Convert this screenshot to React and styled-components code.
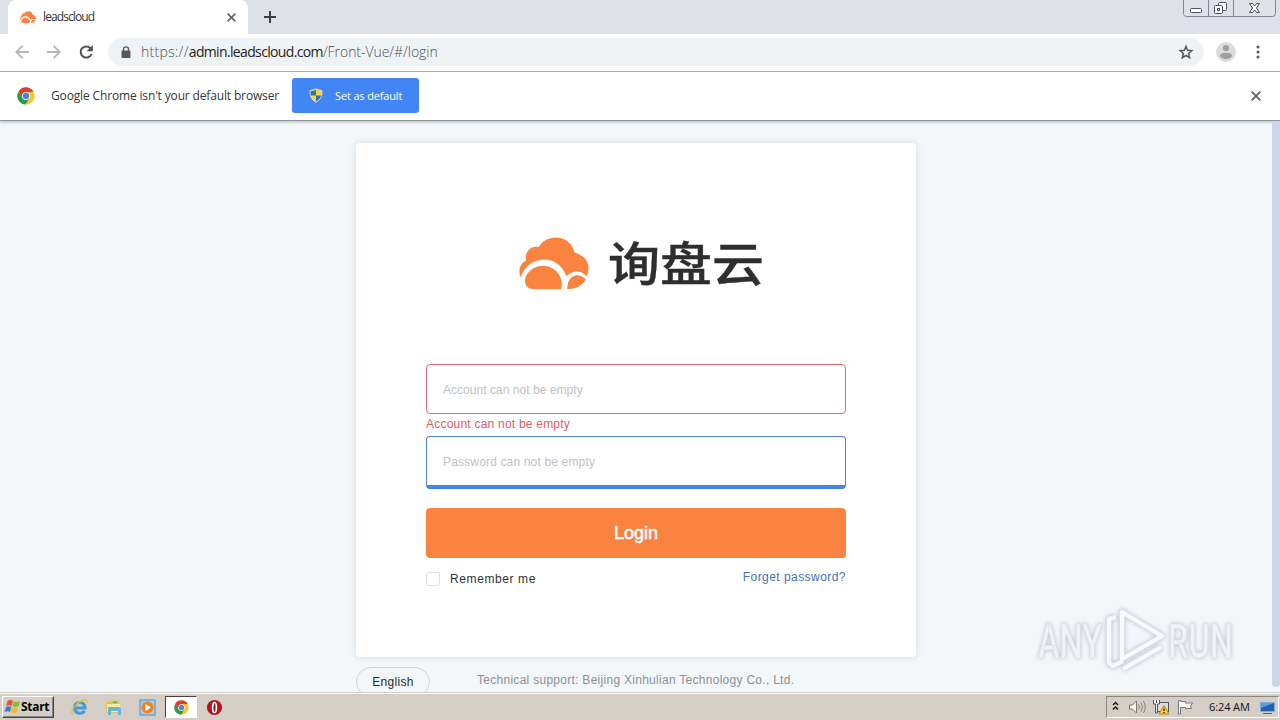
import React from 'react';
import styled, { createGlobalStyle } from 'styled-components';

const App = () => {
  return (
    <Screen>
      <GlobalStyle />
      <TabStrip>
        <Tab>
          <CloudIcon width='16' height='12' />
          <TabTitle>leadscloud</TabTitle>
          <CrossIcon size={9} />
        </Tab>
        <NewTab viewBox='0 0 12 12'>
          <path d='M6 0v12M0 6h12' />
        </NewTab>
        <WindowButtons />
      </TabStrip>
      <Toolbar>
        <NavIcons />
        <AddressBar>
          <LockIcon />
          <Url>
            <i>https://</i>
            <b>admin.leadscloud.com</b>/Front-Vue/#/login
          </Url>
          <StarIcon />
        </AddressBar>
        <ProfileIcon />
        <MenuDots viewBox='0 0 4 14'>
          <circle cx='2' cy='2' r='1.5' />
          <circle cx='2' cy='7' r='1.5' />
          <circle cx='2' cy='12' r='1.5' />
        </MenuDots>
      </Toolbar>
      <InfoBar>
        <ChromeIcon size={18} />
        <InfoText>Google Chrome isn't your default browser</InfoText>
        <DefaultButton>
          <ShieldIcon />
          <span>Set as default</span>
        </DefaultButton>
        <CrossIcon size={10} />
      </InfoBar>
      <LoginPage />
      <Taskbar />
    </Screen>
  );
};

const LoginPage = () => {
  return (
    <Page>
      <Column>
        <Card>
          <Brand>
            <CloudIcon width='70' height='52' />
            <BrandName>询盘云</BrandName>
          </Brand>
          <Field $color='#dc6a78' placeholder='Account can not be empty' />
          <FieldError>Account can not be empty</FieldError>
          <Field
            $color='#4a84d8'
            $focused
            placeholder='Password can not be empty'
          />
          <LoginButton>Login</LoginButton>
          <Options>
            <Remember>
              <Checkbox />
              <span>Remember me</span>
            </Remember>
            <Forget>Forget password?</Forget>
          </Options>
        </Card>
        <Footer>
          <Language>English</Language>
          <Support>
            Technical support: Beijing Xinhulian Technology Co., Ltd.
          </Support>
        </Footer>
      </Column>
      <Scrollbar />
      <Watermark />
    </Page>
  );
};

const Taskbar = () => {
  return (
    <Bar>
      <StartButton>
        <WindowsIcon />
        <span>Start</span>
      </StartButton>
      <QuickLaunch>
        <ExplorerIcon />
        <FolderIcon />
        <PlayerIcon />
        <ActiveTask>
          <ChromeIcon size={15} />
        </ActiveTask>
        <OperaIcon />
      </QuickLaunch>
      <Tray>
        <TrayIcons />
        <Clock>6:24 AM</Clock>
        <DesktopIcon />
      </Tray>
    </Bar>
  );
};

// Icons
const CloudIcon = (props) => (
  <svg viewBox='0 0 71 53' {...props}>
    <path
      fill='#fa8340'
      d='M1.500 41C-1.500 34 1 27 7 24C5 15 13 8 20 10.500C27-3.500 52-3.500 56.500 16C66 18 72 26 70.500 34C70.300 37 69.500 39 68.500 40C62 32 53 35 48 40C40 16 9 18 1.500 41Z'
    />
    <path
      fill='#fa8340'
      d='M7 49C5 45 6 41 8 38C17 25 36 27 42 41C44 45 43.500 49 43 53H15C11 53 8 52 7 49Z'
    />
    <path fill='#fa8340' d='M49 53C49 39 59 35 68 43C64 50 58 53 49 53Z' />
  </svg>
);

const CrossIcon = ({ size }) => (
  <Cross viewBox='0 0 10 10' width={size} height={size}>
    <path d='M.700.700l8.600 8.600M9.300.700L.700 9.300' />
  </Cross>
);

const WindowButtons = () => (
  <WindowControls viewBox='0 0 94 18'>
    <path d='M.500 0v13.500q0 3 3 3h86q3 0 3-3V0M25.500 0v16M50.500 0v16' />
    <g stroke='#4d525c' fill='#fff'>
      <rect x='7.500' y='8.500' width='11' height='4' rx='1' />
      <rect x='35.500' y='2.500' width='8' height='8' rx='1' />
      <rect x='31.500' y='5.500' width='8' height='8' rx='1' />
      <rect x='34.500' y='8.500' width='2' height='2' />
      <path d='M66.500 3.500h3l2 2.500 2-2.500h3l-3 4.500 3 4.500h-3l-2-2.500-2 2.500h-3l3-4.500z' />
    </g>
  </WindowControls>
);

const NavIcons = () => (
  <Nav viewBox='0 0 80 16'>
    <path stroke='#b4b6b8' d='M15 8H2.500M8.500 1.800L2.300 8l6.200 6.200' />
    <path stroke='#b4b6b8' d='M33 8h12.500M39.500 1.800L45.700 8l-6.200 6.200' />
    <path stroke='#505356' strokeWidth='2' d='M76.400 4.200A5.600 5.600 0 1 0 77.500 10' />
    <path fill='#505356' d='M78.800 1v6.200h-6.200z' />
  </Nav>
);

const LockIcon = () => (
  <svg width='10' height='13' viewBox='0 0 10 13'>
    <rect x='.500' y='4.500' width='9' height='7.500' rx='1' fill='#55585c' />
    <path
      d='M2.500 5V3.300a2.500 2.400 0 0 1 5 0V5'
      fill='none'
      stroke='#55585c'
      strokeWidth='1.400'
    />
  </svg>
);

const StarIcon = () => (
  <Star viewBox='0 0 16 16'>
    <path d='M8 2.300l1.600 4 4.200.400-3.200 2.800 1 4.200L8 11.500l-3.600 2.200 1-4.200-3.200-2.800 4.200-.400z' />
  </Star>
);

const ProfileIcon = () => (
  <Profile viewBox='0 0 20 20'>
    <circle cx='10' cy='10' r='10' fill='#dcdcdc' />
    <circle cx='10' cy='6' r='3.100' fill='#a0a0a0' />
    <ellipse cx='10' cy='13.800' rx='6' ry='3.100' fill='#a0a0a0' />
  </Profile>
);

const ChromeIcon = ({ size }) => (
  <svg width={size} height={size} viewBox='0 0 18 18'>
    <circle cx='9' cy='9' r='8.600' fill='#fbc52c' />
    <path
      fill='#de3d30'
      d='M1.500 4.700A8.600 8.600 0 0 1 16.500 4.800L9 5.200 5.500 11z'
    />
    <path
      fill='#279b54'
      d='M1.500 4.700A8.600 8.600 0 0 0 8.500 17.600L12.600 11 9 13 5.500 11z'
    />
    <circle cx='9' cy='9' r='4' fill='#fff' />
    <circle cx='9' cy='9' r='3.200' fill='#4a86e0' />
  </svg>
);

const ShieldIcon = () => (
  <svg width='14' height='15' viewBox='0 0 14 15'>
    <path
      fill='#f5d33c'
      stroke='#d9dccb'
      d='M7 .800Q10 2.500 13 2.500Q13.500 11 7 14.200Q.500 11 1 2.500Q4 2.500 7 .800Z'
    />
    <path fill='#2f70b8' d='M7 1.800V7.500H1.800Q1.500 5 1.700 3.200Q4.500 3 7 1.800Z' />
    <path fill='#2f70b8' d='M7 7.500h5.100Q11 11.500 7 13.500Z' />
  </svg>
);

const WindowsIcon = () => (
  <svg width='17' height='16' viewBox='0 0 17 16'>
    <path fill='#e5572a' d='M3.500 2Q6 0 9 1.800L7.600 7Q5 5.600 2.200 7Z' />
    <path fill='#86b93c' d='M9.800 2.200Q12.500 3.600 16 2L14.500 7.200Q11.500 8.700 8.500 7.300Z' />
    <path fill='#3b7ec9' d='M2 7.900Q4.800 6.500 7.400 7.900L6 13Q3.500 11.600.500 13Z' />
    <path fill='#f4bc2b' d='M8.300 8.200Q11 9.600 14.200 8.200L12.700 13.200Q9.800 14.800 6.900 13.400Z' />
  </svg>
);

const ExplorerIcon = () => (
  <svg width='17' height='17' viewBox='0 0 17 17'>
    <path
      fill='none'
      stroke='#3c9cdc'
      strokeWidth='3'
      d='M4 9h10Q13.500 3.500 8.800 3.500Q3.500 3.800 3.500 9Q4 14.200 9 14.200Q12 14.200 13.600 12'
    />
    <path
      fill='none'
      stroke='#e8bd35'
      strokeWidth='1.300'
      d='M2.500 15Q-1 15 2.500 9Q7 2.500 13 1Q17-.200 15.700 4'
    />
  </svg>
);

const FolderIcon = () => (
  <svg width='17' height='17' viewBox='0 0 17 17'>
    <path fill='#e3bf58' d='M1 3h5l1-1.500h7V14H1z' />
    <path fill='#f8e8a2' d='M2 5h13v8H2z' />
    <path fill='#65b5dc' d='M3 9q0-1 1-1h10q2 0 2 2v6h-3v-4H6v4H3z' />
    <path fill='#5cae5b' d='M8 2.500h4V4H8z' />
  </svg>
);

const PlayerIcon = () => (
  <svg width='17' height='17' viewBox='0 0 17 17'>
    <rect x='1' y='1' width='15' height='15' fill='#a7cce9' stroke='#5290c4' />
    <circle cx='8.500' cy='8.500' r='6' fill='#ee8420' />
    <path fill='#fff' d='M6.500 5v7l5.500-3.500z' />
  </svg>
);

const OperaIcon = () => (
  <svg width='17' height='17' viewBox='0 0 17 17'>
    <circle cx='8.500' cy='8.500' r='7.600' fill='#b3141b' />
    <ellipse
      cx='8.500'
      cy='8.500'
      rx='1.900'
      ry='5'
      fill='#8d1015'
      stroke='#fff'
      strokeWidth='1.700'
    />
  </svg>
);

const TrayIcons = () => (
  <svg width='84' height='18' viewBox='0 0 84 18'>
    <path
      fill='none'
      stroke='#111'
      strokeWidth='1.400'
      d='M2 7L4.500 4.500 7 7M2 11.500l2.500-2.500L7 11.500'
    />
    <path fill='#f4f4f2' stroke='#777' d='M18.500 7h3l4-4v12l-4-4h-3z' />
    <path
      fill='none'
      stroke='#85817c'
      d='M27.500 6.500q1.500 2.500 0 5M30 4.500q3 4.500 0 9M32.500 3q3.500 6 0 12'
    />
    <rect x='46.500' y='4.500' width='11' height='9' fill='#ddd' stroke='#555' />
    <path fill='#eee' stroke='#555' d='M42.500 2v4h2v9h2V6h2V2M45.500 2v3' />
    <path fill='#ffd22e' stroke='#b18a10' d='M53 7.500l5 8.500H48z' />
    <path stroke='#222' strokeWidth='1.300' d='M53 10.500v2.500M53 14v1.200' />
    <path
      fill='#f6f6f4'
      stroke='#777'
      d='M67.500 16V2.500h2V3.500h5v1.500h7l-2 3 1 2.500h-6v-1h-5v6.500z'
    />
  </svg>
);

const DesktopIcon = () => (
  <svg width='17' height='17' viewBox='0 0 17 17'>
    <path fill='#245fae' stroke='#7ea9d8' d='M1.500 3.500h14v9h-14z' />
    <path fill='#5d9cdf' d='M2 4h13L2 9z' />
    <path stroke='#56616f' d='M4 14.500h9' />
  </svg>
);

const Watermark = () => (
  <WatermarkSvg viewBox='0 0 240 90'>
    <text x='7' y='53' textLength='64' lengthAdjust='spacingAndGlyphs'>
      ANY
    </text>
    <text x='137' y='53' textLength='65' lengthAdjust='spacingAndGlyphs'>
      RUN
    </text>
    <g fill='none' strokeLinejoin='round'>
      <path
        stroke='#dcdfe5'
        strokeWidth='6'
        d='M85 12L78 14V58L82 61L92 56M92 64L130 42M91 7V54L131 31Z'
      />
      <path
        stroke='#f8f9fc'
        strokeWidth='4'
        d='M85 12L78 14V58L82 61L92 56M92 64L130 42M91 7V54L131 31Z'
      />
    </g>
  </WatermarkSvg>
);

// Styled Component
const GlobalStyle = createGlobalStyle`
  * {
    box-sizing: border-box;
  }
  body {
    margin: 0;
    overflow: hidden;
    font-family: 'Liberation Sans', Arial, sans-serif;
  }
  svg {
    flex: none;
    display: block;
  }
`;

const Screen = styled.div`
  width: 1280px;
  height: 720px;
  display: flex;
  flex-direction: column;
  background: #f3f7fa;
`;

const TabStrip = styled.div`
  height: 34px;
  flex: none;
  display: flex;
  align-items: flex-start;
  padding-left: 8px;
  background: #dee1e8;
`;

const Tab = styled.div`
  width: 240px;
  height: 34px;
  display: flex;
  align-items: center;
  padding: 0 12px;
  border-radius: 8px 8px 0 0;
  background: #fff;
`;

const TabTitle = styled.span`
  flex: 1;
  margin: -2px 0 0 7px;
  font: 12px 'Open Sans', sans-serif;
  letter-spacing: -0.9px;
  color: #333;
`;

const Cross = styled.svg`
  fill: none;
  stroke: #5f6165;
  stroke-width: 1.8;
`;

const NewTab = styled.svg`
  width: 12px;
  height: 12px;
  margin: 11px 0 0 16px;
  stroke: #3b3d41;
  stroke-width: 2;
`;

const WindowControls = styled.svg`
  width: 94px;
  height: 18px;
  margin: 0 3px 0 auto;
  fill: none;
  stroke: #7f848e;
`;

const Toolbar = styled.div`
  height: 38px;
  flex: none;
  display: flex;
  align-items: center;
  padding: 0 20px 0 14px;
  border-bottom: 1px solid #b2b4b5;
  background: #fff;
`;

const Nav = styled.svg`
  width: 80px;
  height: 16px;
  margin-top: -2px;
  fill: none;
  stroke-width: 1.8;
`;

const AddressBar = styled.div`
  width: 1096px;
  height: 28px;
  display: flex;
  align-items: center;
  margin: -1px 0 0 14px;
  padding: 0 10px 0 13px;
  border-radius: 14px;
  background: #f0f3f5;
`;

const Url = styled.span`
  flex: 1;
  margin: -2px 0 0 10px;
  font: 300 14px 'Open Sans', sans-serif;
  letter-spacing: -0.05px;
  color: #4b5054;
  i {
    font-style: normal;
    letter-spacing: 0.3px;
  }
  b {
    font-weight: 400;
    letter-spacing: -0.65px;
    color: #1c1e21;
  }
`;

const Star = styled.svg`
  width: 16px;
  height: 16px;
  fill: none;
  stroke: #54575b;
  stroke-width: 1.5;
`;

const Profile = styled.svg`
  width: 20px;
  height: 20px;
  margin: -2px 0 0 12px;
`;

const MenuDots = styled.svg`
  width: 4px;
  height: 14px;
  margin: -1px 0 0 auto;
  fill: #55585c;
`;

const InfoBar = styled.div`
  position: relative;
  height: 49px;
  flex: none;
  display: flex;
  align-items: center;
  padding: 0 19px 1px 17px;
  border-bottom: 1px solid #8e9294;
  background: #fff;
  box-shadow: 0 1px 3px rgba(0, 0, 0, 0.25);
  & > ${Cross} {
    margin-left: auto;
  }
`;

const InfoText = styled.span`
  width: 241px;
  margin-left: 16px;
  font: 12px 'Open Sans', sans-serif;
  letter-spacing: -0.15px;
  white-space: nowrap;
  color: #33363a;
`;

const DefaultButton = styled.button`
  width: 127px;
  height: 35px;
  display: flex;
  align-items: center;
  gap: 12px;
  margin-top: -1px;
  padding: 0 0 0 17px;
  border: 0;
  border-radius: 3px;
  background: #4285f4;
  font: 11px 'Open Sans', sans-serif;
  letter-spacing: -0.15px;
  white-space: nowrap;
  color: #fff;
`;

const Page = styled.main`
  position: relative;
  flex: 1;
  min-height: 0;
  display: flex;
  justify-content: space-between;
  overflow: hidden;
  padding-left: 356px;
`;

const Column = styled.div`
  width: 560px;
  padding-top: 22px;
`;

const Card = styled.form`
  height: 514px;
  padding: 94px 70px 0;
  border-radius: 4px;
  background: #fff;
  box-shadow: 0 0 6px rgba(120, 135, 150, 0.28);
`;

const Brand = styled.div`
  height: 127px;
  display: flex;
  align-items: flex-start;
  padding-left: 93px;
`;

const BrandName = styled.span`
  margin: 1px 0 0 19px;
  font: 500 52px/52px 'Noto Sans CJK SC', sans-serif;
  -webkit-text-stroke: 0.4px #2e2e2e;
  transform: scaleY(0.9);
  transform-origin: 0 0;
  color: #2e2e2e;
`;

const Field = styled.input`
  display: block;
  width: 420px;
  height: ${(props) => (props.$focused ? '53px' : '50px')};
  padding: 2px 16px 0;
  border: 1px solid ${(props) => props.$color};
  border-bottom: ${(props) => props.$focused && '4px solid #4885e6'};
  border-radius: 4px;
  background: #fff;
  font: 12px 'Liberation Sans', Arial, sans-serif;
  letter-spacing: ${(props) => (props.$focused ? '0.16px' : '0.04px')};
  &::placeholder {
    color: #bfc1c6;
  }
`;

const FieldError = styled.div`
  height: 22px;
  font-size: 12px;
  line-height: 20px;
  letter-spacing: 0.22px;
  color: #d4606a;
`;

const LoginButton = styled.button`
  display: block;
  width: 420px;
  height: 50px;
  margin-top: 19px;
  border: 0;
  border-radius: 4px;
  background: #fa8340;
  font: 18px 'Liberation Sans', Arial, sans-serif;
  -webkit-text-stroke: 0.5px #fff;
  color: #fff;
`;

const Options = styled.div`
  display: flex;
  justify-content: space-between;
  padding-top: 11px;
  font-size: 12px;
  line-height: 16px;
`;

const Remember = styled.label`
  display: flex;
  align-items: center;
  gap: 10px;
  padding-top: 2px;
  letter-spacing: 0.6px;
  color: #2f3136;
`;

const Checkbox = styled.span`
  width: 14px;
  height: 14px;
  border: 1px solid #dcdfe4;
  border-radius: 2px;
`;

const Forget = styled.a`
  letter-spacing: 0.45px;
  color: #4673b5;
`;

const Footer = styled.footer`
  display: flex;
  align-items: flex-start;
  padding-top: 10px;
`;

const Language = styled.button`
  width: 74px;
  height: 30px;
  padding: 0;
  border: 1px solid #cfd4d9;
  border-radius: 15px;
  background: transparent;
  font: 12px 'Liberation Sans', Arial, sans-serif;
  letter-spacing: 0.3px;
  color: #25282d;
`;

const Support = styled.span`
  margin-left: 47px;
  font-size: 12px;
  line-height: 26px;
  letter-spacing: 0.28px;
  white-space: nowrap;
  color: #8d9094;
`;

const Scrollbar = styled.div`
  width: 8px;
  height: 566px;
  border-radius: 0 0 4px 4px;
  background: #ccd6e6;
`;

const WatermarkSvg = styled.svg`
  position: absolute;
  left: 1031px;
  top: 484px;
  width: 240px;
  height: 90px;
  filter: drop-shadow(0 0 2px rgba(120, 120, 140, 0.45));
  text {
    font: 500 48px Roboto, sans-serif;
    fill: #f1f2f6;
    stroke: #dcdee5;
    stroke-width: 0.6;
  }
`;

const Bar = styled.div`
  height: 28px;
  flex: none;
  display: flex;
  align-items: flex-end;
  padding: 0 1px 2px 2px;
  border-top: 1px solid #d2d0cc;
  background: #d5cec7;
  box-shadow: inset 0 1px #fff;
`;

const StartButton = styled.button`
  width: 52px;
  height: 22px;
  display: flex;
  align-items: center;
  padding: 0 0 1px 1px;
  border: 1px solid;
  border-color: #fff #45423f #45423f #fff;
  background: #d5cec7;
  box-shadow: inset -1px -1px #8b8783;
  font: bold 12px 'Open Sans', sans-serif;
  letter-spacing: -0.3px;
  color: #000;
`;

const QuickLaunch = styled.div`
  height: 22px;
  display: flex;
  align-items: center;
  gap: 17px;
  margin-left: 17px;
`;

const ActiveTask = styled.div`
  width: 32px;
  height: 22px;
  display: flex;
  align-items: center;
  justify-content: center;
  margin: 0 -8px;
  border: 1px solid;
  border-color: #45423f #fff #fff #45423f;
  background: #fff;
`;

const Tray = styled.div`
  width: 173px;
  height: 22px;
  display: flex;
  align-items: center;
  margin-left: auto;
  padding: 0 2px 0 4px;
  border: 1px solid;
  border-color: #8b8783 #fff #fff #8b8783;
`;

const Clock = styled.span`
  flex: 1;
  margin-top: -2px;
  padding-left: 14px;
  font: 11px 'Open Sans', sans-serif;
  letter-spacing: -0.1px;
  white-space: nowrap;
  color: #111;
`;

export default App;
